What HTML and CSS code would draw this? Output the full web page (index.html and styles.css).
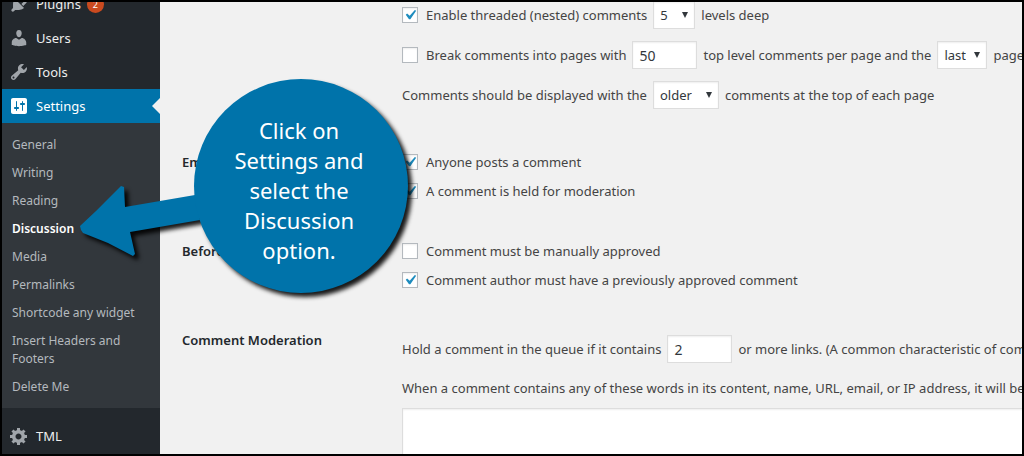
FILE: index.html
```html
<!DOCTYPE html>
<html lang="en">
<head>
    <meta charset="UTF-8">
    <title>Discussion Settings</title>
    <link rel="stylesheet" href="styles.css">
</head>
<body>
<nav class="admin-menu">
    <ul class="menu">
        <li>
            <a class="menu-item" href="#">
                <svg class="icon" viewBox="0 0 20 20"><path d="M13.11 4.36L9.87 7.6 8 5.73l3.24-3.24c.35-.34 1.05-.2 1.56.32.52.51.66 1.21.31 1.55zm-8 1.77l.91-1.12 9.01 9.01-1.19.84c-.71.71-2.63 1.16-3.82 1.16H6.14L4.9 17.26c-.59.59-1.54.59-2.12 0-.59-.58-.59-1.53 0-2.12l1.24-1.24v-3.88c0-1.13.4-3.19 1.09-3.89zm7.26 3.97l3.24-3.24c.34-.35 1.04-.21 1.55.31.52.51.66 1.21.31 1.55l-3.24 3.25z"/></svg>
                Plugins <span class="count">2</span>
            </a>
        </li>
        <li>
            <a class="menu-item" href="#">
                <svg class="icon" viewBox="0 0 20 20"><path d="M10 9.25c-2.27 0-2.73-3.44-2.73-3.44C7 4.02 7.82 2 9.97 2c2.16 0 2.98 2.02 2.71 3.81 0 0-.41 3.44-2.68 3.44zm0 2.57L12.72 10c2.39 0 4.52 2.33 4.52 4.53v2.49s-3.65 1.13-7.24 1.13c-3.65 0-7.24-1.13-7.24-1.13v-2.49c0-2.25 1.94-4.48 4.47-4.48z"/></svg>
                Users
            </a>
        </li>
        <li>
            <a class="menu-item" href="#">
                <svg class="icon" viewBox="0 0 20 20"><path d="M16.68 9.77c-1.34 1.34-3.3 1.67-4.95.99l-5.41 6.52c-.99.99-2.59.99-3.58 0s-.99-2.59 0-3.57l6.52-5.42c-.68-1.65-.35-3.61.99-4.95 1.28-1.28 3.12-1.62 4.72-1.06l-2.89 2.89 2.82 2.82 2.86-2.87c.53 1.58.18 3.39-1.08 4.65zM3.81 16.21c.4.39 1.04.39 1.43 0 .4-.4.4-1.04 0-1.43-.39-.4-1.03-.4-1.43 0-.39.39-.39 1.03 0 1.43z"/></svg>
                Tools
            </a>
        </li>
        <li>
            <a class="menu-item current" href="#">
                <svg class="icon" viewBox="0 0 20 20"><path d="M18 16V4c0-1.1-.9-2-2-2H4c-1.1 0-2 .9-2 2v12c0 1.1.9 2 2 2h12c1.1 0 2-.9 2-2zM8 11h1c.55 0 1 .45 1 1s-.45 1-1 1H8v1.5c0 .28-.22.5-.5.5s-.5-.22-.5-.5V13H6c-.55 0-1-.45-1-1s.45-1 1-1h1V5.5c0-.28.22-.5.5-.5s.5.22.5.5V11zm5-2h-1c-.55 0-1-.45-1-1s.45-1 1-1h1V5.5c0-.28.22-.5.5-.5s.5.22.5.5V7h1c.55 0 1 .45 1 1s-.45 1-1 1h-1v5.5c0 .28-.22.5-.5.5s-.5-.22-.5-.5V9z"/></svg>
                Settings
            </a>
            <ul class="submenu">
                <li><a href="#">General</a></li>
                <li><a href="#">Writing</a></li>
                <li><a href="#">Reading</a></li>
                <li><a class="active" href="#">Discussion</a></li>
                <li><a href="#">Media</a></li>
                <li><a href="#">Permalinks</a></li>
                <li><a href="#">Shortcode any widget</a></li>
                <li><a href="#">Insert Headers and Footers</a></li>
                <li><a href="#">Delete Me</a></li>
            </ul>
        </li>
        <li class="separated">
            <a class="menu-item" href="#">
                <svg class="icon" viewBox="0 0 20 20"><path d="M18 12h-2.18c-.17.7-.44 1.35-.81 1.93l1.54 1.54-2.1 2.1-1.54-1.54c-.58.36-1.23.63-1.91.79V19H8v-2.18c-.68-.16-1.33-.43-1.91-.79l-1.54 1.54-2.12-2.12 1.54-1.54c-.36-.58-.63-1.23-.79-1.91H1V9.03h2.17c.16-.7.44-1.35.8-1.94L2.43 5.55l2.1-2.1 1.54 1.54c.58-.37 1.24-.64 1.93-.81V2h3v2.18c.68.16 1.33.43 1.91.79l1.54-1.54 2.12 2.12-1.54 1.54c.36.59.64 1.24.8 1.94H18V12zm-8.5 1.5c1.66 0 3-1.34 3-3s-1.34-3-3-3-3 1.34-3 3 1.34 3 3 3z"/></svg>
                TML
            </a>
        </li>
    </ul>
</nav>

<main class="content">
    <form class="settings-form">
        <section class="row">
            <div class="fields wide">
                <div class="line">
                    <input type="checkbox" id="threaded" checked>
                    <label for="threaded">Enable threaded (nested) comments</label>
                    <select id="depth" aria-label="Levels deep"><option>5</option></select>
                    <label for="depth">levels deep</label>
                </div>
                <div class="line">
                    <input type="checkbox" id="paged">
                    <label for="paged">Break comments into pages with</label>
                    <input type="text" id="per-page" value="50">
                    <label for="per-page">top level comments per page and the</label>
                    <select id="default-page"><option>last</option></select>
                    <label for="default-page">page</label>
                </div>
                <div class="line">
                    <label for="order">Comments should be displayed with the</label>
                    <select id="order"><option>older</option></select>
                    <label for="order">comments at the top of each page</label>
                </div>
            </div>
        </section>

        <section class="row">
            <h2>Email me whenever</h2>
            <div class="fields">
                <div class="line">
                    <input type="checkbox" id="notify" checked>
                    <label for="notify">Anyone posts a comment</label>
                </div>
                <div class="line">
                    <input type="checkbox" id="held" checked>
                    <label for="held">A comment is held for moderation</label>
                </div>
            </div>
        </section>

        <section class="row">
            <h2>Before a comment appears</h2>
            <div class="fields">
                <div class="line">
                    <input type="checkbox" id="manual">
                    <label for="manual">Comment must be manually approved</label>
                </div>
                <div class="line">
                    <input type="checkbox" id="previous" checked>
                    <label for="previous">Comment author must have a previously approved comment</label>
                </div>
            </div>
        </section>

        <section class="row">
            <h2>Comment Moderation</h2>
            <div class="fields moderation">
                <div class="line">
                    <label for="max-links">Hold a comment in the queue if it contains</label>
                    <input type="text" id="max-links" value="2">
                    <label for="max-links">or more links. (A common characteristic of comment</label>
                </div>
                <label for="words">When a comment contains any of these words in its content, name, URL, email, or IP address, it will be</label>
                <textarea id="words" rows="10"></textarea>
            </div>
        </section>
    </form>
</main>

<!-- callout pointing at the Discussion entry -->
<div class="callout">
    <svg class="callout-shape" viewBox="0 0 340 230">
        <path d="M5 156 4 152 20 137 29 128 45 112 48 113 49 133 119 121 124 146 54 158 59 180 57 182 32 169 7 159Z"/>
        <circle cx="225" cy="112" r="107"/>
    </svg>
    <p class="callout-text">Click on Settings and select the Discussion option.</p>
</div>
</body>
</html>
```

FILE: styles.css
```css
* {
    box-sizing: border-box;
}

body {
    position: relative;
    display: flex;
    height: 100vh;
    margin: 0;
    border: 2px solid #000;
    overflow: hidden;
    background: #f1f1f1;
    color: #444;
    font: 13px/20px "Noto Sans", "Open Sans", sans-serif;
}

/* sidebar */
.admin-menu {
    flex: 0 0 158px;
    background: #23282d;
    overflow: hidden;
}

.menu,
.submenu {
    margin: 0;
    padding: 0;
    list-style: none;
}

.menu {
    margin-top: -15px;
}

.menu-item {
    position: relative;
    display: flex;
    align-items: center;
    height: 34px;
    color: #eee;
    text-decoration: none;
}

.icon {
    width: 20px;
    height: 20px;
    margin: 0 7px;
    fill: #a0a5aa;
}

.count {
    width: 17px;
    height: 17px;
    margin-left: 6px;
    border-radius: 50%;
    background: #ca4a1f;
    color: #fff;
    font-size: 9px;
    line-height: 17px;
    text-align: center;
}

.current {
    background: #0073aa;
    color: #fff;
}

.current .icon {
    fill: #fff;
}

.current::after {
    content: "";
    position: absolute;
    right: 0;
    border: 8px solid transparent;
    border-left: 0;
    border-right-color: #f1f1f1;
}

.submenu {
    padding: 8px 0 7px;
    background: #32373c;
}

.submenu a {
    display: block;
    padding: 5px 10px;
    color: #b4b9be;
    font-size: 12px;
    line-height: 18px;
    text-decoration: none;
}

.submenu .active {
    color: #fff;
    font-weight: 600;
}

.separated {
    margin-top: 11px;
}

/* settings form */
.content {
    flex: 1;
    min-width: 0;
    padding-left: 22px;
    overflow: hidden;
}

.settings-form {
    min-width: 1000px;
    margin-top: -1px;
}

.row {
    display: grid;
    grid-template-columns: 220px 1fr;
    padding-bottom: 40px;
    white-space: nowrap;
}

.row h2 {
    margin: 0;
    color: #23282d;
    font-size: 13px;
    font-weight: 600;
    line-height: 20px;
}

.fields {
    display: flex;
    flex-direction: column;
    grid-column: 2;
    gap: 9px;
}

.wide {
    gap: 12px;
    padding-bottom: 3px;
}

.moderation {
    gap: 10px;
    padding-top: 5px;
}

.moderation .line {
    margin-bottom: 5px;
}

.line {
    display: flex;
    align-items: center;
    gap: 6px;
}

input,
select,
textarea {
    margin: 0;
    border: 1px solid #ddd;
    border-radius: 0;
    background: #fff;
    box-shadow: inset 0 1px 2px rgba(0, 0, 0, .07);
    color: #32373c;
    font: inherit;
}

input[type="checkbox"] {
    width: 16px;
    height: 16px;
    margin-right: 2px;
    border-color: #b4b9be;
    appearance: none;
}

input[type="checkbox"]:checked {
    background: #fff url("data:image/svg+xml,%3Csvg xmlns='http://www.w3.org/2000/svg' viewBox='0 0 20 20'%3E%3Cpath fill='%231e8cbe' d='M14.83 4.89l1.34.94-5.81 8.38H9.02L5.78 9.67l1.34-1.25 2.57 2.4z'/%3E%3C/svg%3E") center / 20px no-repeat;
}

input[type="text"] {
    width: 65px;
    height: 28px;
    padding: 3px 6px;
    font-size: 14px;
}

select {
    height: 28px;
    padding: 0 26px 0 6px;
    background: #fff url("data:image/svg+xml,%3Csvg xmlns='http://www.w3.org/2000/svg' viewBox='0 0 6 6'%3E%3Cpath fill='%2332373c' d='M0 0h6L3 6z'/%3E%3C/svg%3E") right 6px center / 6px 6px no-repeat;
    appearance: none;
}

#default-page {
    padding-right: 20px;
}

textarea {
    resize: none;
}

/* callout */
.callout {
    position: absolute;
    left: 74px;
    top: 72px;
    width: 340px;
    height: 230px;
    pointer-events: none;
}

.callout-shape {
    width: 100%;
    height: 100%;
    overflow: visible;
    fill: #0073aa;
    filter: drop-shadow(4px 4px 2px rgba(0, 0, 0, .9));
}

.callout-text {
    position: absolute;
    left: 148px;
    top: 41px;
    width: 150px;
    margin: 0;
    color: #fff;
    font-size: 22px;
    line-height: 30px;
    text-align: center;
}
```
